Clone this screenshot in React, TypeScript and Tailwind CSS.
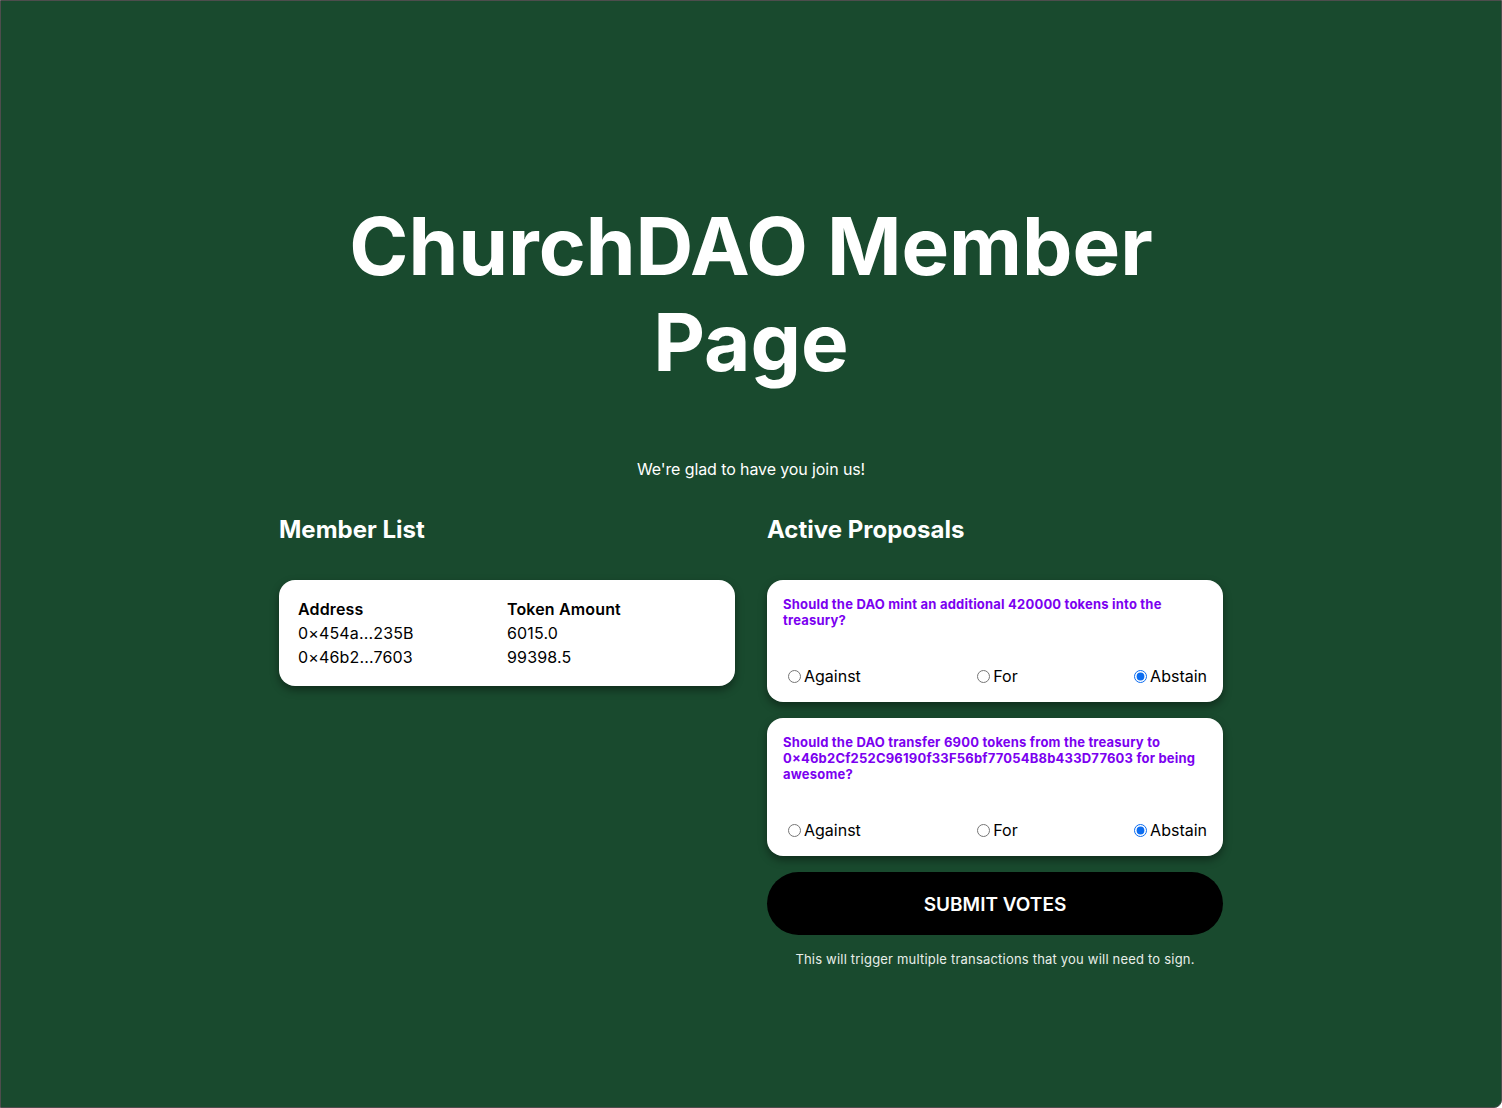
import { useState } from 'react';

const MEMBERS = [
  { address: '0×454a...235B', amount: '6015.0' },
  { address: '0×46b2...7603', amount: '99398.5' },
];

const PROPOSALS = [
  { id: 1, text: 'Should the DAO mint an additional 420000 tokens into the treasury?' },
  {
    id: 2,
    text: 'Should the DAO transfer 6900 tokens from the treasury to 0×46b2Cf252C96190f33F56bf77054B8b433D77603 for being awesome?',
  },
];

const CHOICES = ['Against', 'For', 'Abstain'];

export default function App() {
  const [votes, setVotes] = useState<Record<number, string>>({ 1: 'Abstain', 2: 'Abstain' });

  return (
    <div className="min-h-screen bg-[#194a2e] border border-[#4d4d4d] rounded-br-lg text-white font-['Inter',sans-serif]">
      <div className="max-w-[944px] mx-auto pt-[197px] pb-20">
        <h1 className="text-center text-[80px] leading-[96px] font-bold">ChurchDAO Member Page</h1>
        <p className="text-center mt-[67px] text-base leading-6 tracking-[-0.1px]">We're glad to have you join us!</p>

        <div className="grid grid-cols-2 gap-8 mt-[33px]">
          {/* Members */}
          <div>
            <h2 className="text-2xl leading-8 font-bold">Member List</h2>
            <div className="mt-[34px] bg-white text-black rounded-2xl shadow-[0_4px_8px_rgba(0,0,0,0.4)] px-[19px] pt-[17px] pb-[17px]">
              <div className="grid grid-cols-2 tracking-[0.15px]">
                <div className="font-semibold leading-6">Address</div>
                <div className="font-semibold leading-6">Token Amount</div>
                {MEMBERS.map(m => (
                  <div key={m.address} className="contents">
                    <div className="leading-6">{m.address}</div>
                    <div className="leading-6">{m.amount}</div>
                  </div>
                ))}
              </div>
            </div>
          </div>

          {/* Proposals */}
          <div>
            <h2 className="text-2xl leading-8 font-bold">Active Proposals</h2>
            <div className="mt-[34px] flex flex-col gap-4">
              {PROPOSALS.map(p => (
                <div key={p.id} className="bg-white text-black rounded-2xl shadow-[0_4px_8px_rgba(0,0,0,0.4)] px-4 pt-4 pb-4">
                  <p className="text-[13px] leading-4 font-bold text-[#7b00f0] tracking-[0.2px]">{p.text}</p>
                  <div className="mt-[38px] flex justify-between items-center leading-5">
                    {CHOICES.map(c => (
                      <label key={c} className="flex items-center">
                        <input
                          type="radio"
                          name={`p${p.id}`}
                          checked={votes[p.id] === c}
                          onChange={() => setVotes({ ...votes, [p.id]: c })}
                          className="ml-[5px] mr-[3px] w-[13px] h-[13px] accent-[#0b6cf0]"
                        />
                        <span>{c}</span>
                      </label>
                    ))}
                  </div>
                </div>
              ))}
              <button className="h-[63px] w-full rounded-full bg-black text-white text-[19px] font-semibold pt-[3px]">
                SUBMIT VOTES
              </button>
              <p className="text-center text-[13px] leading-5 -mt-[2px] tracking-[0.2px] text-[#e8eee9]">
                This will trigger multiple transactions that you will need to sign.
              </p>
            </div>
          </div>
        </div>
      </div>
    </div>
  );
}
